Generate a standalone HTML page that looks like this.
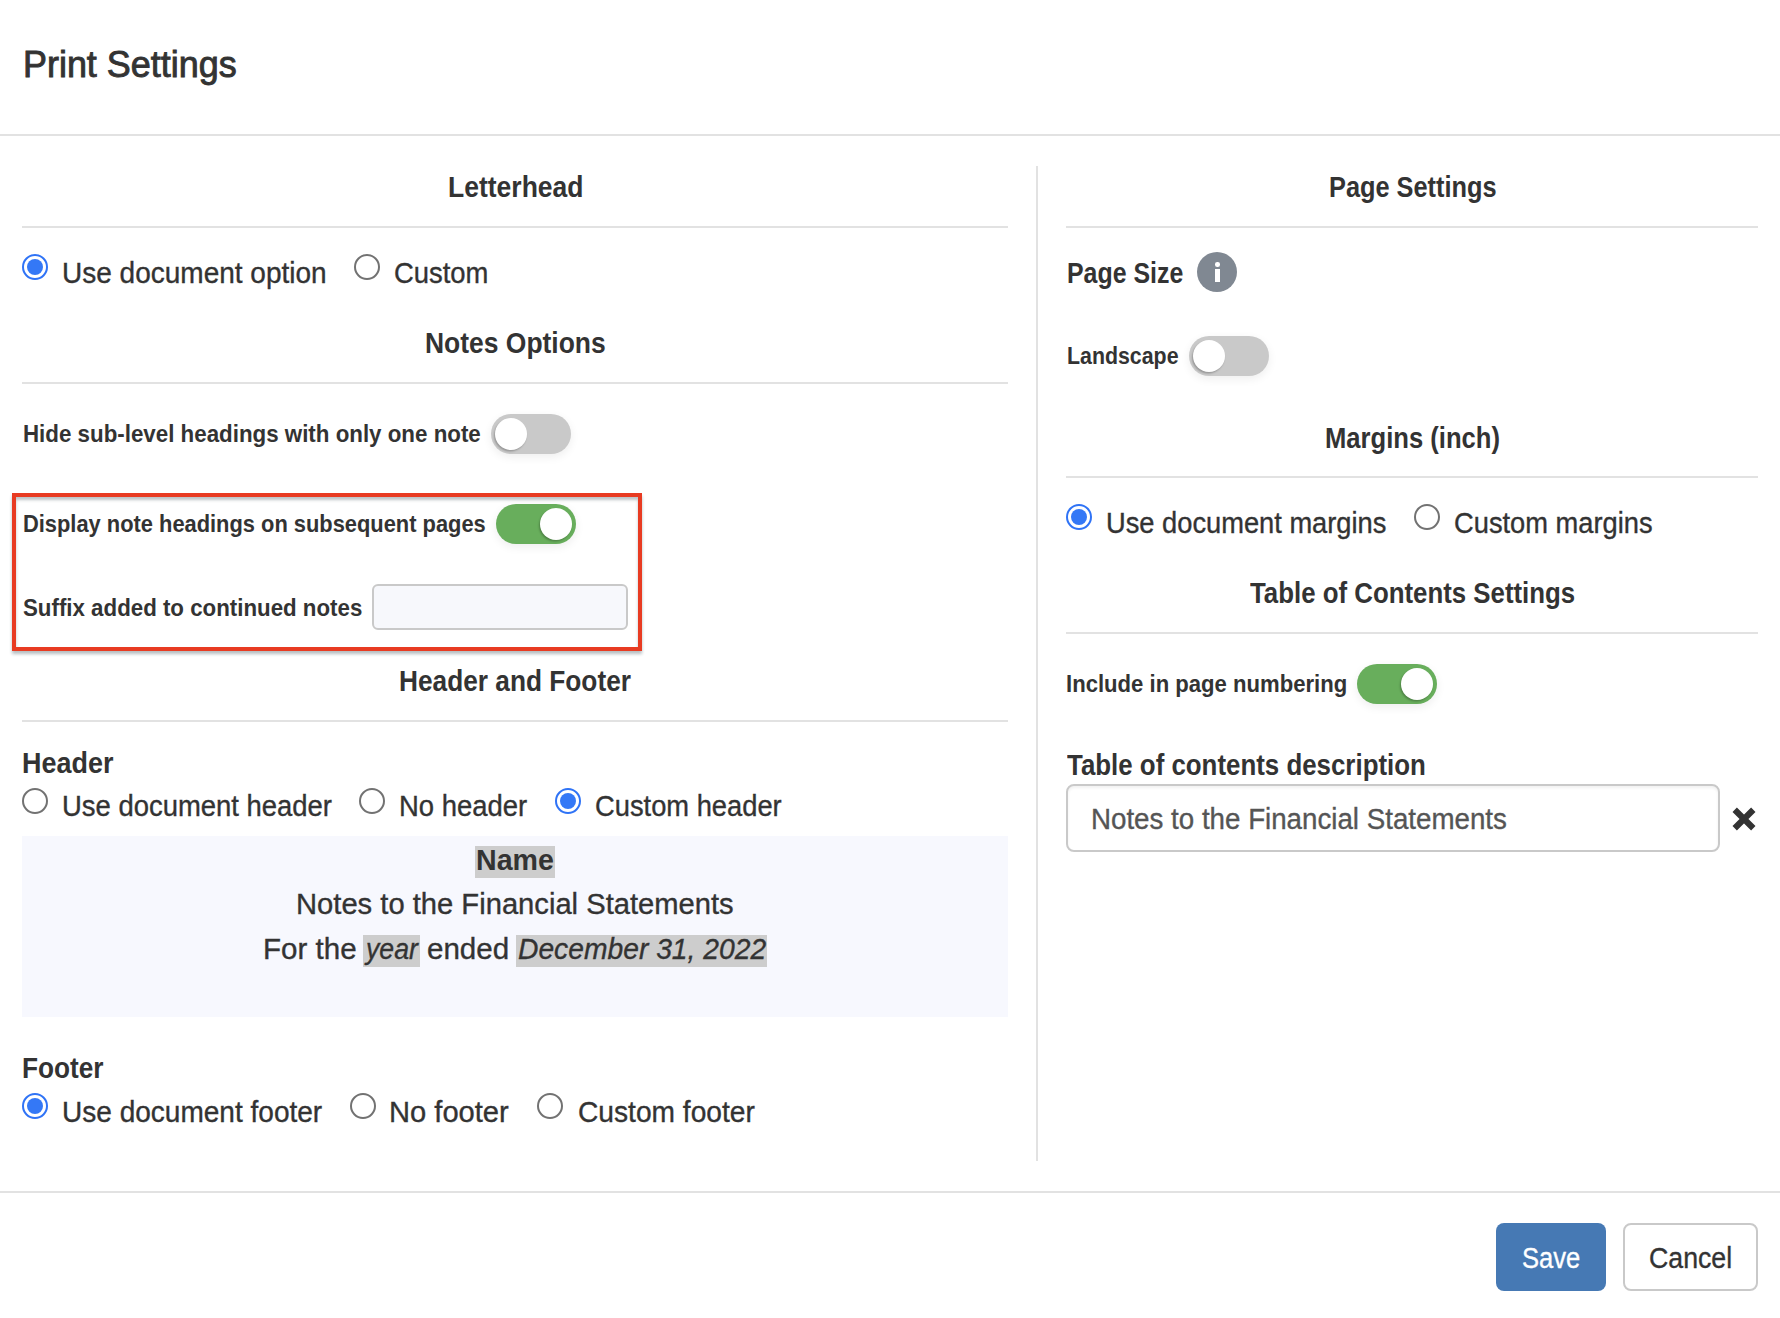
<!DOCTYPE html>
<html><head><meta charset="utf-8"><title>Print Settings</title>
<style>
html,body{margin:0;padding:0;background:#fff;width:1780px;height:1318px;overflow:hidden;position:relative}
.t{position:absolute;white-space:nowrap;font-family:"Liberation Sans",sans-serif;transform-origin:0 0}
.abs{position:absolute}
.hr{position:absolute;height:2px;background:#e2e2e2}
.rc{position:absolute;width:26px;height:26px;box-sizing:border-box;border-radius:50%;border:2px solid #2f73f6;background:#fff}
.rc::after{content:"";position:absolute;left:3px;top:3px;width:16px;height:16px;border-radius:50%;background:#3478f6}
.ru{position:absolute;width:26px;height:26px;box-sizing:border-box;border-radius:50%;border:2px solid #727272;background:#fff}
.tg{position:absolute;width:80px;height:40px;border-radius:20px;box-shadow:0 3px 10px rgba(0,0,0,.07)}
.tg.off{background:#c9c9c9}
.tg.on{background:#68ae5c}
.kn{position:absolute;top:4px;width:32px;height:32px;border-radius:50%;background:#fff;box-shadow:-1px 1.5px 2px rgba(0,0,0,.25)}
.off .kn{left:4px}
.on .kn{left:44px}
.redbox{box-sizing:border-box;border:4px solid #e83b22;box-shadow:0 3px 3px rgba(40,60,70,.33), inset 0 3px 3px rgba(40,60,70,.30)}
</style></head><body>
<div class="hr" style="left:0px;top:134px;width:1780px"></div>
<div class="hr" style="left:0px;top:1191px;width:1780px"></div>
<div class="hr" style="left:1036px;top:166px;width:2px;height:995px"></div>
<div class="hr" style="left:22px;top:226px;width:986px"></div>
<div class="hr" style="left:22px;top:382px;width:986px"></div>
<div class="hr" style="left:22px;top:720px;width:986px"></div>
<div class="hr" style="left:1066px;top:226px;width:692px"></div>
<div class="hr" style="left:1066px;top:476px;width:692px"></div>
<div class="hr" style="left:1066px;top:632px;width:692px"></div>
<div class="abs" style="left:22px;top:836px;width:986px;height:181px;background:#f7f8fe"></div>
<div class="abs" style="left:475px;top:846px;width:80px;height:32px;background:#cdcdcd"></div>
<div class="abs" style="left:363px;top:935px;width:57px;height:32px;background:#cdcdcd"></div>
<div class="abs" style="left:516px;top:935px;width:251px;height:32px;background:#cdcdcd"></div>
<div class="rc" style="left:22px;top:254px"></div>
<div class="ru" style="left:354px;top:254px"></div>
<div class="ru" style="left:22px;top:788px"></div>
<div class="ru" style="left:359px;top:788px"></div>
<div class="rc" style="left:555px;top:788px"></div>
<div class="rc" style="left:22px;top:1093px"></div>
<div class="ru" style="left:350px;top:1093px"></div>
<div class="ru" style="left:537px;top:1093px"></div>
<div class="rc" style="left:1066px;top:504px"></div>
<div class="ru" style="left:1414px;top:504px"></div>
<div class="tg off" style="left:491px;top:414px"><div class="kn"></div></div>
<div class="tg on" style="left:496px;top:504px"><div class="kn"></div></div>
<div class="tg off" style="left:1189px;top:336px"><div class="kn"></div></div>
<div class="tg on" style="left:1357px;top:664px"><div class="kn"></div></div>
<div class="abs redbox" style="left:12px;top:493px;width:630px;height:158px"></div>
<div class="abs" style="left:372px;top:584px;width:256px;height:46px;box-sizing:border-box;border:2px solid #c9c9c9;border-radius:6px;background:#f7f8fc"></div>
<div class="abs" style="left:1197px;top:252px;width:40px;height:40px;border-radius:50%;background:#808892"></div>
<div class="abs" style="left:1215px;top:262px;width:4.5px;height:4.5px;border-radius:50%;background:#fff"></div>
<div class="abs" style="left:1215px;top:269px;width:4.5px;height:13px;background:#fff"></div>
<div class="abs" style="left:1066px;top:784px;width:654px;height:68px;box-sizing:border-box;border:2px solid #c9c9c9;border-radius:8px;background:#fff;box-shadow:inset 0 2px 3px rgba(0,0,0,.06)"></div>
<svg class="abs" style="left:1732px;top:807px" width="24" height="24" viewBox="0 0 24 24"><path d="M2.7 2.7 L21.3 21.3 M21.3 2.7 L2.7 21.3" stroke="#333" stroke-width="6.2" stroke-linecap="butt"/></svg>
<div class="abs" style="left:1496px;top:1223px;width:110px;height:68px;border-radius:8px;background:#4679b4"></div>
<div class="abs" style="left:1623px;top:1223px;width:135px;height:68px;box-sizing:border-box;border:2px solid #c9c9c9;border-radius:8px;background:#fff"></div>
<div class="t" style="left:23.00px;top:47px;font-size:36px;line-height:36px;font-weight:400;font-style:normal;color:#333333;-webkit-text-stroke:0.9px #333333;transform:scaleX(0.9976)">Print Settings</div>
<div class="t" style="left:447.79px;top:173px;font-size:29px;line-height:29px;font-weight:700;font-style:normal;color:#333333;-webkit-text-stroke:0.0px #333333;transform:scaleX(0.9138)">Letterhead</div>
<div class="t" style="left:61.77px;top:259px;font-size:29px;line-height:29px;font-weight:400;font-style:normal;color:#333333;-webkit-text-stroke:0.35px #333333;transform:scaleX(0.9656)">Use document option</div>
<div class="t" style="left:394.05px;top:259px;font-size:29px;line-height:29px;font-weight:400;font-style:normal;color:#333333;-webkit-text-stroke:0.35px #333333;transform:scaleX(0.9452)">Custom</div>
<div class="t" style="left:424.99px;top:329px;font-size:29px;line-height:29px;font-weight:700;font-style:normal;color:#333333;-webkit-text-stroke:0.0px #333333;transform:scaleX(0.9120)">Notes Options</div>
<div class="t" style="left:22.57px;top:422px;font-size:24px;line-height:24px;font-weight:700;font-style:normal;color:#333333;-webkit-text-stroke:0.0px #333333;transform:scaleX(0.9303)">Hide sub-level headings with only one note</div>
<div class="t" style="left:22.69px;top:512px;font-size:24px;line-height:24px;font-weight:700;font-style:normal;color:#333333;-webkit-text-stroke:0.0px #333333;transform:scaleX(0.9107)">Display note headings on subsequent pages</div>
<div class="t" style="left:22.60px;top:596px;font-size:24px;line-height:24px;font-weight:700;font-style:normal;color:#333333;-webkit-text-stroke:0.0px #333333;transform:scaleX(0.9288)">Suffix added to continued notes</div>
<div class="t" style="left:399.29px;top:667px;font-size:29px;line-height:29px;font-weight:700;font-style:normal;color:#333333;-webkit-text-stroke:0.0px #333333;transform:scaleX(0.9054)">Header and Footer</div>
<div class="t" style="left:22.07px;top:749px;font-size:29px;line-height:29px;font-weight:700;font-style:normal;color:#333333;-webkit-text-stroke:0.0px #333333;transform:scaleX(0.9295)">Header</div>
<div class="t" style="left:61.61px;top:792px;font-size:29px;line-height:29px;font-weight:400;font-style:normal;color:#333333;-webkit-text-stroke:0.35px #333333;transform:scaleX(0.9461)">Use document header</div>
<div class="t" style="left:398.81px;top:792px;font-size:29px;line-height:29px;font-weight:400;font-style:normal;color:#333333;-webkit-text-stroke:0.35px #333333;transform:scaleX(0.9464)">No header</div>
<div class="t" style="left:594.86px;top:792px;font-size:29px;line-height:29px;font-weight:400;font-style:normal;color:#333333;-webkit-text-stroke:0.35px #333333;transform:scaleX(0.9417)">Custom header</div>
<div class="t" style="left:475.91px;top:846px;font-size:29px;line-height:29px;font-weight:700;font-style:normal;color:#333333;-webkit-text-stroke:0.0px #333333;transform:scaleX(0.9864)">Name</div>
<div class="t" style="left:295.79px;top:890px;font-size:29px;line-height:29px;font-weight:400;font-style:normal;color:#333333;-webkit-text-stroke:0.35px #333333;transform:scaleX(1.0057)">Notes to the Financial Statements</div>
<div class="t" style="left:262.56px;top:935px;font-size:29px;line-height:29px;font-weight:400;font-style:normal;color:#333333;-webkit-text-stroke:0.35px #333333;transform:scaleX(1.0187)">For the</div>
<div class="t" style="left:365.84px;top:935px;font-size:29px;line-height:29px;font-weight:400;font-style:italic;color:#333333;-webkit-text-stroke:0.35px #333333;transform:scaleX(0.9204)">year</div>
<div class="t" style="left:426.98px;top:935px;font-size:29px;line-height:29px;font-weight:400;font-style:normal;color:#333333;-webkit-text-stroke:0.35px #333333;transform:scaleX(1.0189)">ended</div>
<div class="t" style="left:518.00px;top:935px;font-size:29px;line-height:29px;font-weight:400;font-style:italic;color:#333333;-webkit-text-stroke:0.35px #333333;transform:scaleX(0.9741)">December 31, 2022</div>
<div class="t" style="left:22.40px;top:1054px;font-size:29px;line-height:29px;font-weight:700;font-style:normal;color:#333333;-webkit-text-stroke:0.0px #333333;transform:scaleX(0.9030)">Footer</div>
<div class="t" style="left:61.87px;top:1098px;font-size:29px;line-height:29px;font-weight:400;font-style:normal;color:#333333;-webkit-text-stroke:0.35px #333333;transform:scaleX(0.9666)">Use document footer</div>
<div class="t" style="left:389.39px;top:1098px;font-size:29px;line-height:29px;font-weight:400;font-style:normal;color:#333333;-webkit-text-stroke:0.35px #333333;transform:scaleX(1.0040)">No footer</div>
<div class="t" style="left:577.53px;top:1098px;font-size:29px;line-height:29px;font-weight:400;font-style:normal;color:#333333;-webkit-text-stroke:0.35px #333333;transform:scaleX(0.9710)">Custom footer</div>
<div class="t" style="left:1522.12px;top:1244px;font-size:29px;line-height:29px;font-weight:400;font-style:normal;color:#ffffff;-webkit-text-stroke:0.35px #ffffff;transform:scaleX(0.8816)">Save</div>
<div class="t" style="left:1649.28px;top:1244px;font-size:29px;line-height:29px;font-weight:400;font-style:normal;color:#333333;-webkit-text-stroke:0.35px #333333;transform:scaleX(0.9211)">Cancel</div>
<div class="t" style="left:1328.63px;top:173px;font-size:29px;line-height:29px;font-weight:700;font-style:normal;color:#333333;-webkit-text-stroke:0.0px #333333;transform:scaleX(0.8737)">Page Settings</div>
<div class="t" style="left:1066.64px;top:259px;font-size:29px;line-height:29px;font-weight:700;font-style:normal;color:#333333;-webkit-text-stroke:0.0px #333333;transform:scaleX(0.8587)">Page Size</div>
<div class="t" style="left:1066.61px;top:344px;font-size:24px;line-height:24px;font-weight:700;font-style:normal;color:#333333;-webkit-text-stroke:0.0px #333333;transform:scaleX(0.8893)">Landscape</div>
<div class="t" style="left:1324.82px;top:424px;font-size:29px;line-height:29px;font-weight:700;font-style:normal;color:#333333;-webkit-text-stroke:0.0px #333333;transform:scaleX(0.8829)">Margins (inch)</div>
<div class="t" style="left:1106.12px;top:509px;font-size:29px;line-height:29px;font-weight:400;font-style:normal;color:#333333;-webkit-text-stroke:0.35px #333333;transform:scaleX(0.9402)">Use document margins</div>
<div class="t" style="left:1453.76px;top:509px;font-size:29px;line-height:29px;font-weight:400;font-style:normal;color:#333333;-webkit-text-stroke:0.35px #333333;transform:scaleX(0.9408)">Custom margins</div>
<div class="t" style="left:1250.20px;top:579px;font-size:29px;line-height:29px;font-weight:700;font-style:normal;color:#333333;-webkit-text-stroke:0.0px #333333;transform:scaleX(0.8905)">Table of Contents Settings</div>
<div class="t" style="left:1066.08px;top:672px;font-size:24px;line-height:24px;font-weight:700;font-style:normal;color:#333333;-webkit-text-stroke:0.0px #333333;transform:scaleX(0.9210)">Include in page numbering</div>
<div class="t" style="left:1066.90px;top:751px;font-size:29px;line-height:29px;font-weight:700;font-style:normal;color:#333333;-webkit-text-stroke:0.0px #333333;transform:scaleX(0.8920)">Table of contents description</div>
<div class="t" style="left:1091.19px;top:805px;font-size:29px;line-height:29px;font-weight:400;font-style:normal;color:#555555;-webkit-text-stroke:0.35px #555555;transform:scaleX(0.9556)">Notes to the Financial Statements</div>
</body></html>
